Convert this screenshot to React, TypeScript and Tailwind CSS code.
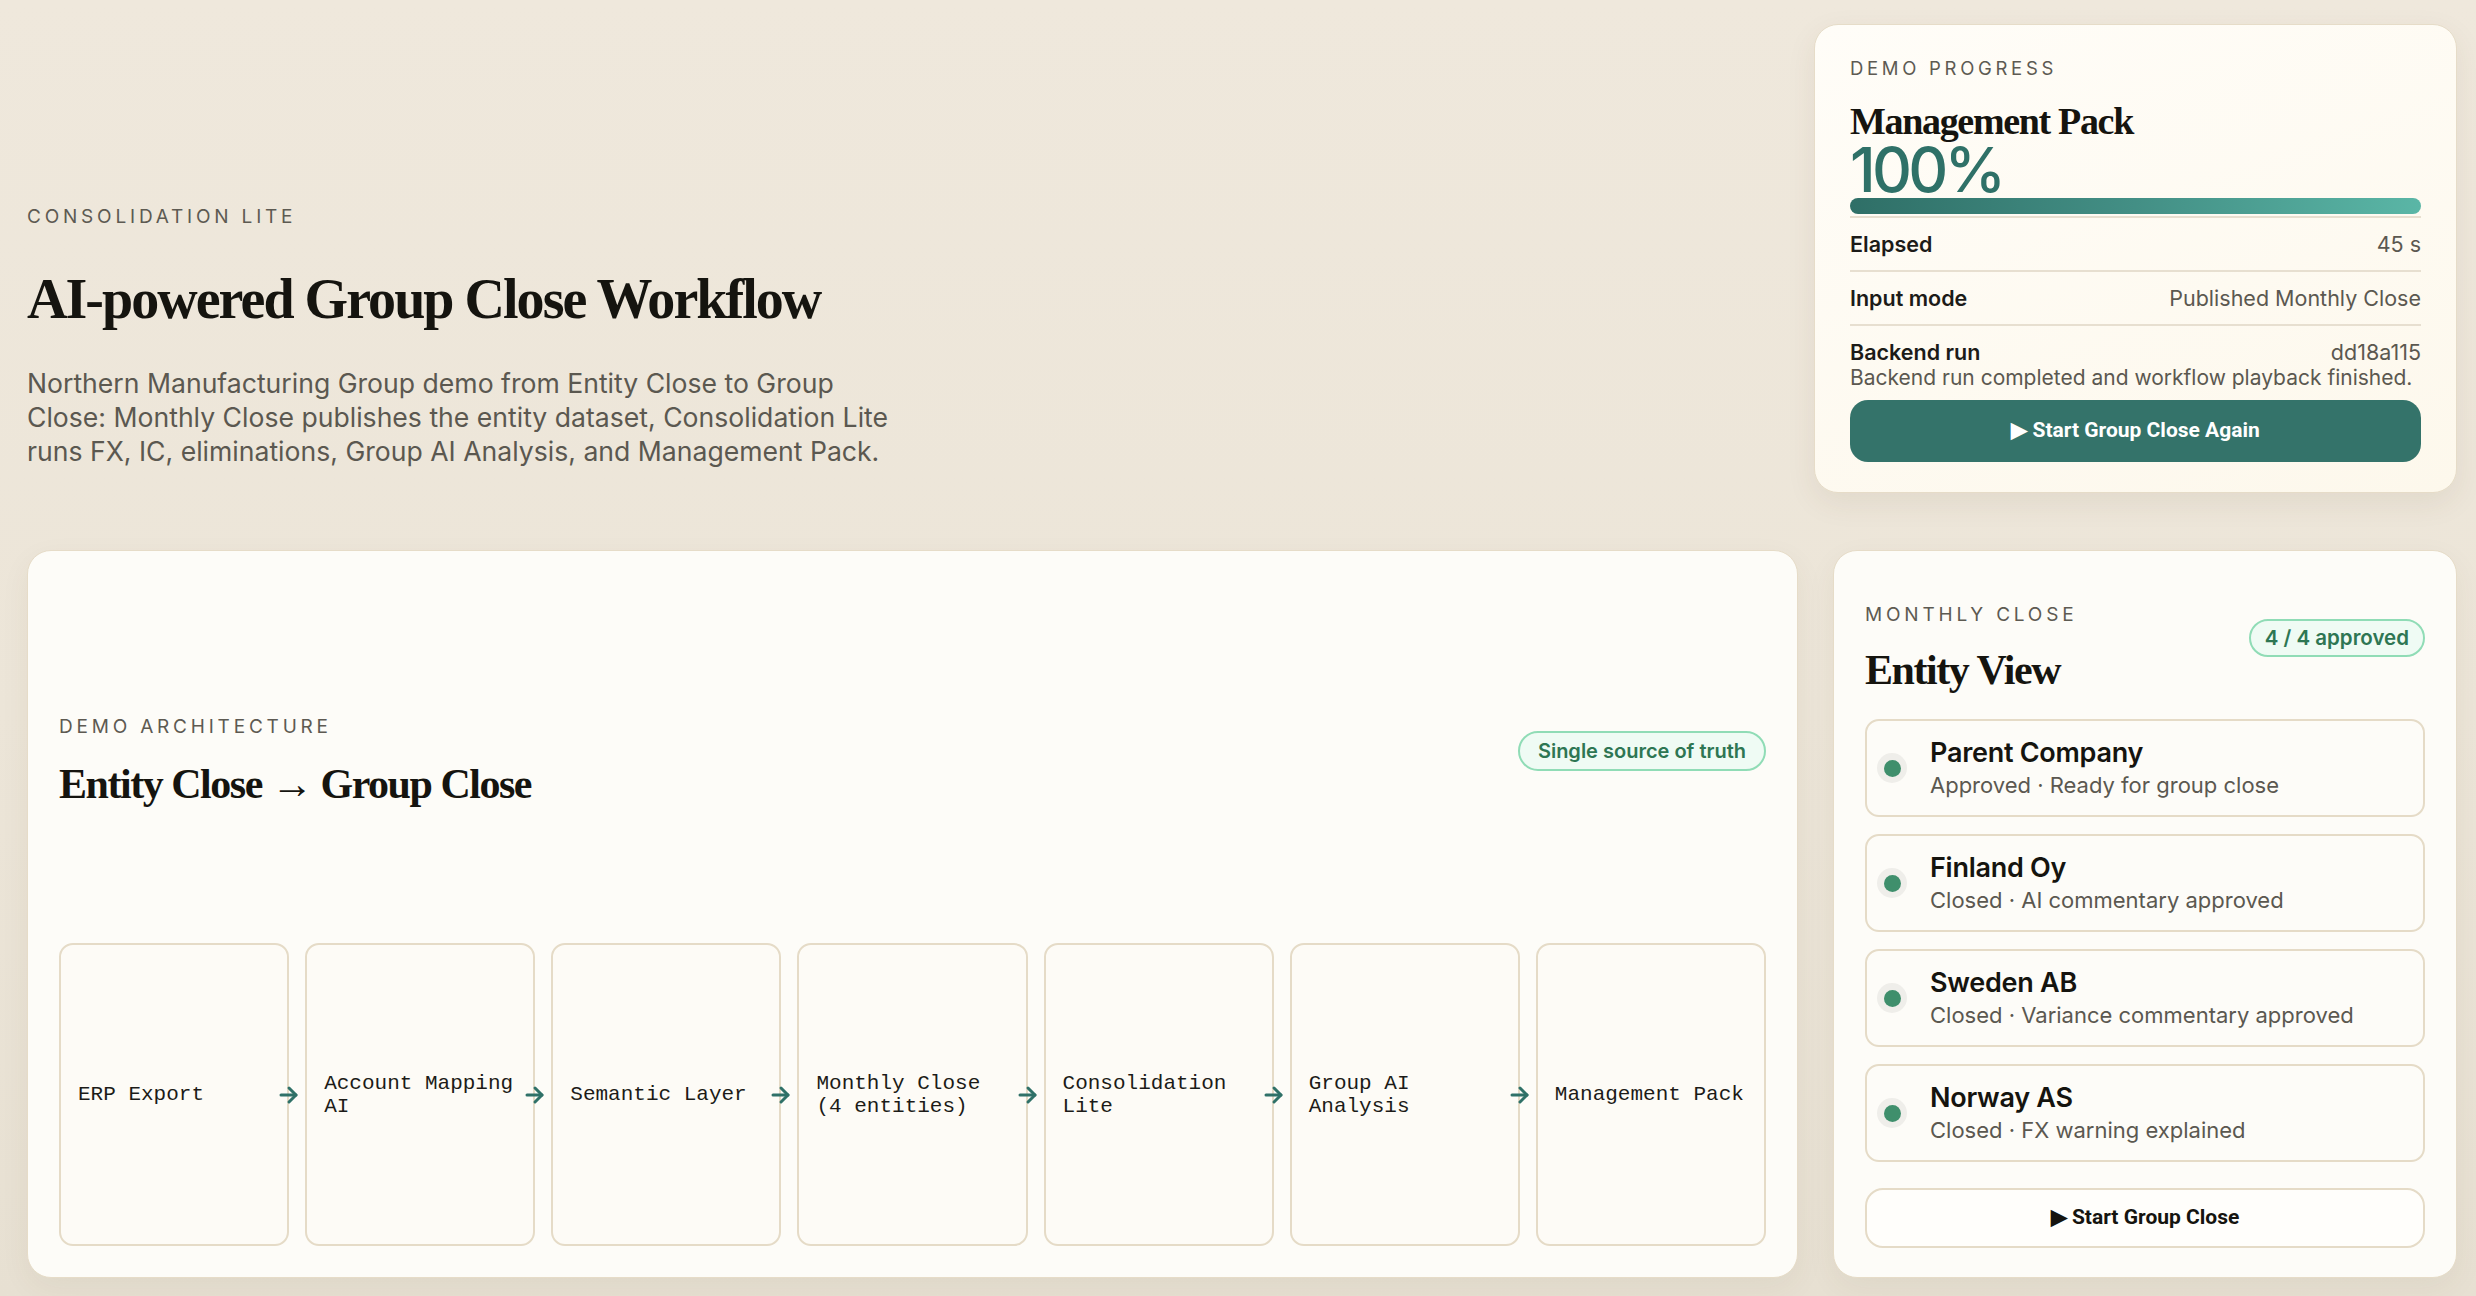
const flow = [
  "ERP Export",
  "Account Mapping AI",
  "Semantic Layer",
  "Monthly Close (4 entities)",
  "Consolidation Lite",
  "Group AI Analysis",
  "Management Pack",
];

const entities = [
  { name: "Parent Company", note: "Approved · Ready for group close" },
  { name: "Finland Oy", note: "Closed · AI commentary approved" },
  { name: "Sweden AB", note: "Closed · Variance commentary approved" },
  { name: "Norway AS", note: "Closed · FX warning explained" },
];

const serif = "font-['Liberation_Serif',serif] font-bold tracking-[-0.035em] text-[#15140f]";
const eyebrow = "text-[19px] leading-[24px] uppercase tracking-[0.2em] text-[#5d5a52]";

function Arrow() {
  return (
    <svg viewBox="0 0 22 22" className="h-[22px] w-[22px]" fill="none" stroke="#2f7168" strokeWidth="3" strokeLinecap="round" strokeLinejoin="round">
      <path d="M3 11h15" />
      <path d="M11 4l7 7-7 7" />
    </svg>
  );
}

export default function App() {
  return (
    <main className="min-h-screen bg-[linear-gradient(180deg,#efe8dc_0%,#ece5d8_55%,#e7e0d2_100%)] pb-[17px] pl-[27px] pr-[19px] pt-[24px] font-['Inter',sans-serif] text-[#1c1b18]">
      <div className="flex items-end gap-[40px]">
        <section className="flex-1 pb-[25px]">
          <p className={eyebrow}>Consolidation Lite</p>
          <h1 className={`mt-[38px] text-[56px] leading-[64px] ${serif}`}>AI-powered Group Close Workflow</h1>
          <p className="mt-[35px] max-w-[880px] text-[26.6px] leading-[34px] text-[#5b5850]">
            Northern Manufacturing Group demo from Entity Close to Group Close: Monthly Close publishes the entity dataset, Consolidation Lite runs FX, IC, eliminations, Group AI Analysis, and Management Pack.
          </p>
        </section>

        <section className="w-[643px] shrink-0 rounded-[24px] border border-[#e6dcc8] bg-[linear-gradient(160deg,#fffdf8_0%,#fdf8ec_100%)] px-[35px] pb-[30px] pt-[31px] shadow-[0_10px_30px_rgba(90,70,40,0.08)]">
          <p className="text-[18.5px] leading-[24px] uppercase tracking-[0.2em] text-[#5d5a52]">Demo progress</p>
          <h2 className={`mt-[21px] text-[38px] leading-[40px] ${serif}`}>Management Pack</h2>
          <p className="mt-[1px] text-[62px] font-medium leading-[56px] tracking-[-0.06em] text-[#2f7168]">100%</p>
          <div className="h-[16px] rounded-full bg-[linear-gradient(90deg,#2f6f67_0%,#438f85_50%,#5ab6a6_100%)]" />
          <div className="mt-[2px] text-[21.5px] leading-[26px]">
            <div className="flex items-center justify-between border-t-2 border-[#e7dfd0] py-[13px]">
              <span className="font-semibold text-[#1c1b18]">Elapsed</span>
              <span className="text-[#5b5850]">45 s</span>
            </div>
            <div className="flex items-center justify-between border-t-2 border-[#e7dfd0] py-[13px]">
              <span className="font-semibold text-[#1c1b18]">Input mode</span>
              <span className="text-[#5b5850]">Published Monthly Close</span>
            </div>
            <div className="border-t-2 border-[#e7dfd0] pt-[13px]">
              <div className="flex items-center justify-between">
                <span className="font-semibold text-[#1c1b18]">Backend run</span>
                <span className="text-[#5b5850]">dd18a115</span>
              </div>
              <p className="text-[21px] leading-[26px] text-[#5b5850]">Backend run completed and workflow playback finished.</p>
            </div>
          </div>
          <button className="mt-[9px] flex h-[62px] w-full items-center justify-center rounded-[18px] bg-[#34736a] font-['Roboto',sans-serif] text-[21px] font-bold text-white">
            ▶ Start Group Close Again
          </button>
        </section>
      </div>

      <div className="mt-[57px] flex gap-[35px]">
        <section className="flex-1 rounded-[24px] border border-[#e6dcc8] bg-[#fdfcf8] px-[31px] pb-[31px] pt-[164px] shadow-[0_10px_30px_rgba(90,70,40,0.06)]">
          <div className="flex items-center justify-between">
            <div>
              <p className={eyebrow}>Demo architecture</p>
              <h2 className={`mt-[21px] text-[42px] leading-[48px] ${serif}`}>Entity Close → Group Close</h2>
            </div>
            <span className="mb-[22px] rounded-full border-2 border-[#90dcb6] bg-[#effbf4] px-[18px] py-[5px] text-[20px] leading-[26px] font-semibold text-[#2e7653]">
              Single source of truth
            </span>
          </div>
          <div className="mt-[135px] grid grid-cols-7 gap-[16px]">
            {flow.map((step, i) => (
              <div key={step} className="relative flex h-[303px] items-center rounded-[14px] border-2 border-[#e5dbc7] bg-[#fdfbf6] px-[17px]">
                <span className="font-['Liberation_Mono',monospace] text-[21px] leading-[23px] text-[#1c1b18]">{step}</span>
                {i < flow.length - 1 && (
                  <span className="absolute right-[-13px] top-1/2 z-10 -translate-y-1/2">
                    <Arrow />
                  </span>
                )}
              </div>
            ))}
          </div>
        </section>

        <section className="w-[624px] shrink-0 rounded-[24px] border border-[#e6dcc8] bg-[#fdfcf8] px-[31px] pb-[29px] pt-[52px] shadow-[0_10px_30px_rgba(90,70,40,0.06)]">
          <div className="flex items-start justify-between">
            <div>
              <p className={eyebrow}>Monthly close</p>
              <h2 className={`mt-[19px] text-[42px] leading-[48px] ${serif}`}>Entity View</h2>
            </div>
            <span className="mt-[16px] rounded-full border-2 border-[#90dcb6] bg-[#effbf4] px-[14px] py-[4px] text-[20.5px] leading-[26px] font-semibold text-[#2e7653]">
              4 / 4 approved
            </span>
          </div>
          <div className="mt-[25px] flex flex-col gap-[17px]">
            {entities.map((e) => (
              <div key={e.name} className="flex h-[98px] items-center gap-[23px] rounded-[14px] border-2 border-[#e5dbc7] bg-[#fdfcf8] pl-[10px]">
                <span className="flex h-[30px] w-[30px] items-center justify-center rounded-full bg-[#efeeea]">
                  <span className="h-[17px] w-[17px] rounded-full bg-[#3f8f6c]" />
                </span>
                <div>
                  <p className="text-[27px] font-semibold leading-[34px] tracking-[-0.01em] text-[#15140f]">{e.name}</p>
                  <p className="text-[22px] leading-[30px] text-[#5b5850]">{e.note}</p>
                </div>
              </div>
            ))}
          </div>
          <button className="mt-[26px] flex h-[60px] w-full items-center justify-center rounded-[18px] border-2 border-[#e5dbc7] bg-[#fffefb] font-['Roboto',sans-serif] text-[21px] font-bold text-[#15140f]">
            ▶ Start Group Close
          </button>
        </section>
      </div>
    </main>
  );
}
